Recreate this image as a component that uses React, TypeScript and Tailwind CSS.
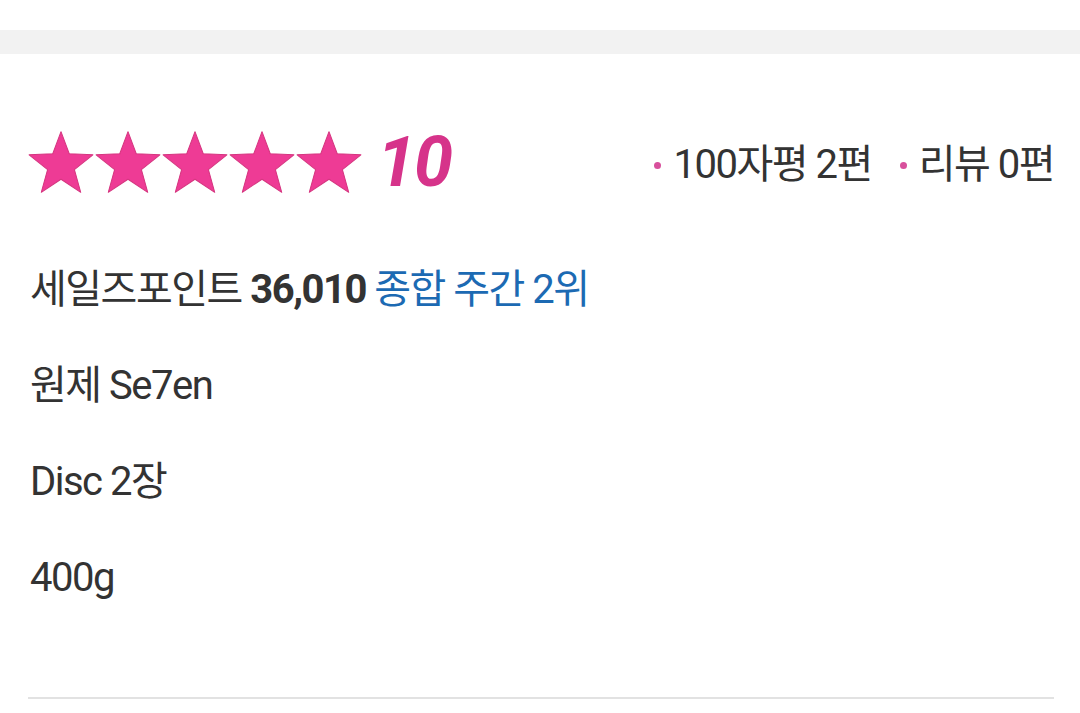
const FONT = "font-['Roboto','Noto_Sans_CJK_KR',sans-serif]";

function Star() {
  return (
    <svg viewBox="-48.5 -51 97 92.5" className="w-[66px] h-[62px]">
      <polygon
        points="0,-50 12.3,-17 47.6,-15.5 20,6.5 29.4,40.5 0,21 -29.4,40.5 -20,6.5 -47.6,-15.5 -12.3,-17"
        fill="#ee3b95"
        stroke="#d5357f"
        strokeWidth="1.5"
        strokeLinejoin="round"
      />
    </svg>
  );
}

function Count({ label }: { label: string }) {
  return (
    <div className="flex items-center gap-[12px]">
      <span className="w-[7px] h-[7px] rounded-full bg-[#d8509c]" />
      <span className="text-[40px] leading-none tracking-[-1.5px] text-[#333]">
        {label}
      </span>
    </div>
  );
}

export default function App() {
  return (
    <div className={`w-[1080px] h-[713px] bg-white overflow-hidden ${FONT}`}>
      <div className="h-[30px]" />
      <div className="h-[24px] bg-[#f2f2f2]" />

      <div className="pl-[28px] pr-[26px]">
        <div className="flex items-center justify-between mt-[73px]">
          <div className="flex items-center">
            <div className="flex gap-[1px]">
              <Star />
              <Star />
              <Star />
              <Star />
              <Star />
            </div>
            <span className="ml-[15px] text-[70px] leading-none font-bold italic text-[#d6338a] tracking-[-2px]">
              10
            </span>
          </div>
          <div className="flex items-center gap-[28px] pt-[6px]">
            <Count label="100자평 2편" />
            <Count label="리뷰 0편" />
          </div>
        </div>

        <div className="flex flex-col gap-[48px] mt-[69px] pl-[2px] text-[40px] leading-[48px] text-[#333] tracking-[-1.5px]">
          <div>
            세일즈포인트 <span className="font-bold">36,010</span>{" "}
            <span className="text-[#1c6ab3]">종합 주간 2위</span>
          </div>
          <div>원제 Se7en</div>
          <div>Disc 2장</div>
          <div>400g</div>
        </div>

        <div className="mt-[95px] h-[2px] bg-[#e2e2e2]" />
      </div>
    </div>
  );
}
